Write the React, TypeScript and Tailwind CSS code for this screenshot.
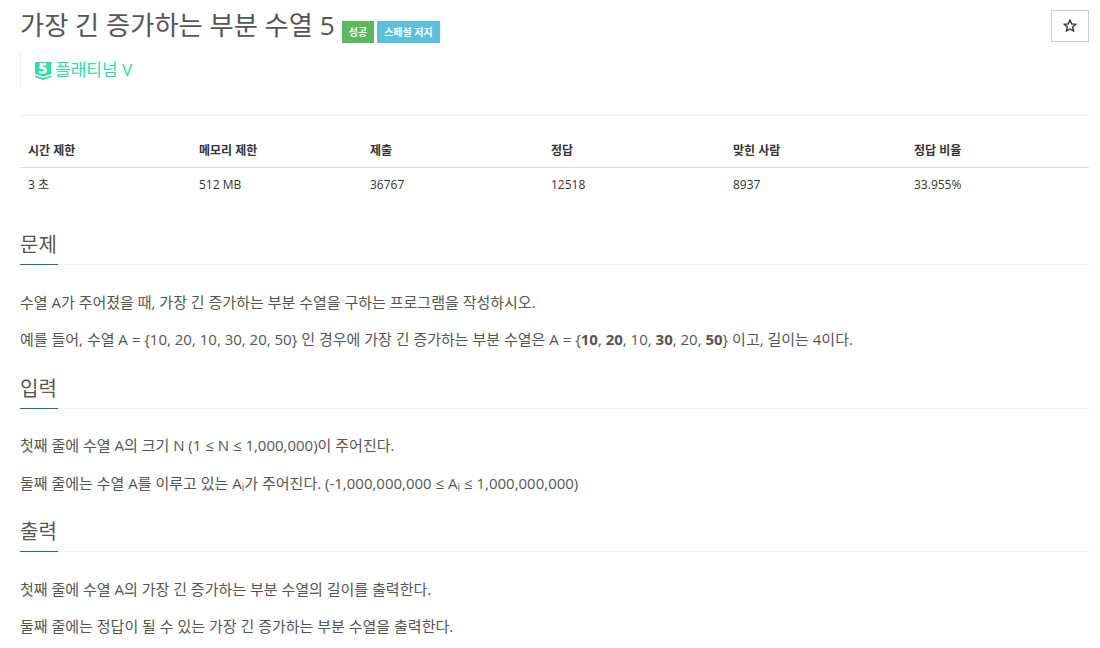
const columns = [
    { label: "시간 제한", value: "3 초", width: "w-[171px]" },
    { label: "메모리 제한", value: "512 MB", width: "w-[171px]" },
    { label: "제출", value: "36767", width: "w-[181px]" },
    { label: "정답", value: "12518", width: "w-[182px]" },
    { label: "맞힌 사람", value: "8937", width: "w-[181px]" },
    { label: "정답 비율", value: "33.955%", width: "flex-1" },
];

function Section({ title, children }: { title: string; children: React.ReactNode }) {
    return (
        <section>
            <div className="border-b border-dotted border-[#e8e8e8] h-[38px]">
                <h2 className="inline-block h-[38px] border-b border-[#0076c0] pr-[1px] text-[20px] leading-[36px] text-[#555]">
                    {title}
                </h2>
            </div>
            <div className="pt-[25.5px] pb-[5px]">{children}</div>
        </section>
    );
}

function P({ children }: { children: React.ReactNode }) {
    return <p className="mb-[15px] text-[15px] leading-[22.5px] text-[#555]">{children}</p>;
}

export default function App() {
    return (
        <div
            className="w-[1100px] h-[648px] overflow-hidden bg-white pl-[20px] pr-[11px] pt-[9px]"
            style={{ fontFamily: '"Open Sans", "Noto Sans CJK KR", sans-serif' }}
        >
            <div className="flex items-start justify-between">
                <div className="flex items-end h-[34px]">
                    <h1 className="text-[26.25px] leading-[36px] text-[#555]">가장 긴 증가하는 부분 수열 5</h1>
                    <span className="ml-[7px] flex h-[22px] items-center bg-[#5cb85c] px-[7px] text-[10px] font-bold text-white">성공</span>
                    <span className="ml-[3px] flex h-[22px] items-center bg-[#5bc0de] px-[7px] text-[10px] font-bold text-white">스페셜 저지</span>
                </div>
                <button className="mt-[1px] flex h-[32px] w-[38px] items-center justify-center border border-[#ccc] bg-white">
                    <svg width="14" height="13" viewBox="0 0 14 13" className="mb-[1px]">
                        <path d="M7 1.2l1.7 3.7 4 .4-3 2.7.9 4L7 10l-3.6 2 .9-4-3-2.7 4-.4z" fill="none" stroke="#333" strokeWidth="1.4" strokeLinejoin="miter" />
                    </svg>
                </button>
            </div>

            <div className="mt-[9px] flex h-[36px] items-center border-l border-[#eee] pl-[14px]">
                <svg width="16" height="18" viewBox="0 0 16 18" className="mr-[4px] mt-[2px] overflow-visible">
                    <path d="M0 0h16v12l-8 2.5-8-2.5z" fill="#27e2a4" />
                    <path d="M0 13.5l8 2.5 8-2.5v1.5l-8 3-8-3z" fill="#27e2a4" />
                    <text x="8" y="12" textAnchor="middle" fontSize="15" fontWeight="800" fill="#fff">5</text>
                </svg>
                <span className="text-[17px] leading-[20px] text-[#27e2a4]">플래티넘 V</span>
            </div>

            <div className="mt-[27px] border-t border-[#eee] pt-[17px]">
                <div className="flex h-[35px] items-center border-b border-[#ddd] pt-[2px] text-[12px] font-bold text-[#333]">
                    {columns.map((c) => (
                        <div key={c.label} className={`${c.width} pl-[8px]`}>{c.label}</div>
                    ))}
                </div>
                <div className="flex h-[33px] items-center text-[12px] text-[#333]">
                    {columns.map((c) => (
                        <div key={c.label} className={`${c.width} pl-[8px]`}>{c.value}</div>
                    ))}
                </div>
            </div>

            <div className="mt-[26px]">
                <Section title="문제">
                    <P>수열 A가 주어졌을 때, 가장 긴 증가하는 부분 수열을 구하는 프로그램을 작성하시오.</P>
                    <P>
                        예를 들어, 수열 A = {"{"}10, 20, 10, 30, 20, 50{"}"} 인 경우에 가장 긴 증가하는 부분 수열은 A = {"{"}
                        <b>10</b>, <b>20</b>, 10, <b>30</b>, 20, <b>50</b>{"}"} 이고, 길이는 4이다.
                    </P>
                </Section>
                <Section title="입력">
                    <P>첫째 줄에 수열 A의 크기 N (1 ≤ N ≤ 1,000,000)이 주어진다.</P>
                    <P>
                        둘째 줄에는 수열 A를 이루고 있는 A<sub className="text-[10px]">i</sub>가 주어진다. (-1,000,000,000 ≤ A<sub className="text-[10px]">i</sub> ≤ 1,000,000,000)
                    </P>
                </Section>
                <Section title="출력">
                    <P>첫째 줄에 수열 A의 가장 긴 증가하는 부분 수열의 길이를 출력한다.</P>
                    <P>둘째 줄에는 정답이 될 수 있는 가장 긴 증가하는 부분 수열을 출력한다.</P>
                </Section>
            </div>
        </div>
    );
}
